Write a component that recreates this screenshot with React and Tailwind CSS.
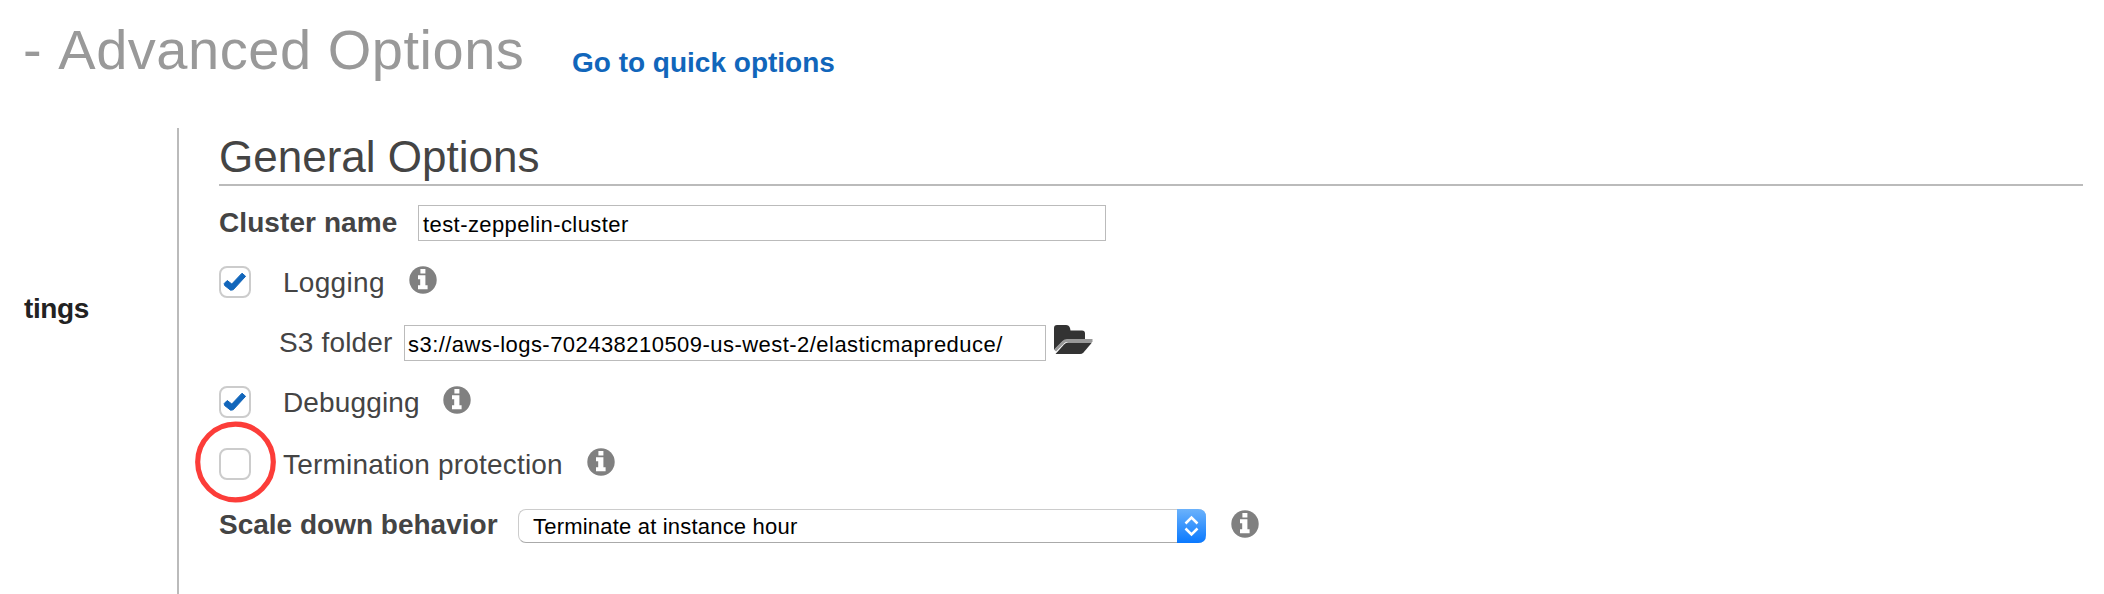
import React from "react";

function InfoIcon() {
  return (
    <svg className="size-7 shrink-0" viewBox="0 0 28 28">
      <circle cx="14" cy="14" r="13.7" fill="#808080" />
      <path fill="#fff" d="M11.400 3h5v4.400h-5zM9 9.200h7.400v10h2.200v4H9v-4h2.200v-6H9z" />
    </svg>
  );
}

function Checkbox({ checked }) {
  return (
    <span className="flex size-8 shrink-0 items-center justify-center rounded-[8px] border-2 border-[#cccccc] bg-white">
      {checked && (
        <svg className="size-7" viewBox="0 0 28 28">
          <path d="M3.200 15.500L6.200 12.500L10.800 16L21 5.200L24.600 8.300L12.200 21.800L9.600 22.200L3.600 17.500z" fill="#1166bb" stroke="#1166bb" strokeWidth="1" strokeLinejoin="round" />
        </svg>
      )}
    </span>
  );
}

function FolderIcon() {
  return (
    <svg className="h-[30px] w-10 shrink-0" viewBox="0 0 40 30">
      <path fill="#333" d="M1 25V3q0-3 3-3h9q3 0 4 3l.5 2.500H29q3 0 3 3V15H13q-2 0-3.500 1.500z" />
      <path fill="none" stroke="#999" strokeWidth="3" d="M2 25.500L10.500 17q1.500-1.500 3.500-1.500H39.500" />
      <path fill="#333" d="M2.500 29L11 19.500Q13 17.500 15 17.500H39L30.500 27.500Q29 29 27 29z" />
    </svg>
  );
}

export default function App() {
  return (
    <div className="flex h-[594px] w-[2104px] flex-col overflow-hidden bg-white font-['Liberation_Sans',Arial,sans-serif] text-[28px] leading-8 whitespace-nowrap text-[#444444]">
      <header className="flex h-32 shrink-0 items-start pl-[23px]">
        <h1 className="w-[549px] pt-[18px] text-[56px] leading-[64px] tracking-[0.53px] text-[#999999]">- <span className="inline-block">Advanced Options</span></h1>
        <a className="pt-[47px] font-bold text-[#1166bb]">Go to quick options</a>
      </header>
      <div className="flex flex-1">
        <aside className="w-[177px] pt-[165px] pl-6 font-bold tracking-[-0.4px] text-[#222222]">tings</aside>
        <main className="flex flex-1 flex-col border-l-2 border-[#bbbbbb] pr-[21px] pl-10">
          <h2 className="h-[58px] border-b-2 border-[#bbbbbb] pt-1 text-[44px] leading-[50px]">General Options</h2>
          <div className="mt-[19px] flex h-9 items-start">
            <label className="w-[199px] pt-0.5 font-bold tracking-[0.08px]">Cluster name</label>
            <div className="h-9 w-[688px] border border-[#bbbbbb] pt-[3px] pl-1 text-[22px] tracking-[0.42px] text-black">test-zeppelin-cluster</div>
          </div>
          <div className="mt-[25px] flex h-8 items-start">
            <Checkbox checked />
            <span className="ml-8 w-[126px] pt-px tracking-[0.3px]">Logging</span>
            <InfoIcon />
          </div>
          <div className="mt-[27px] flex h-9 items-start pl-[60px]">
            <label className="w-[125px] pt-0.5 tracking-[0.15px]">S3 folder</label>
            <div className="h-9 w-[642px] border border-[#bbbbbb] pt-[3px] pl-[3px] text-[22px] tracking-[0.46px] text-black">s3://aws-logs-702438210509-us-west-2/elasticmapreduce/</div>
            <span className="ml-[7px]"><FolderIcon /></span>
          </div>
          <div className="mt-[25px] flex h-8 items-start">
            <Checkbox checked />
            <span className="ml-8 w-[160px] pt-px tracking-[0.15px]">Debugging</span>
            <InfoIcon />
          </div>
          <div className="mt-[30px] flex h-8 items-start">
            <span className="relative">
              <Checkbox />
              <svg className="absolute -top-7 -left-6 h-[84px] w-[82px]" viewBox="0 0 82 84">
                <circle cx="40.500" cy="42" r="37.800" fill="none" stroke="#fc3d39" strokeWidth="5.200" />
              </svg>
            </span>
            <span className="ml-8 w-[304px] pt-px tracking-[0.2px]">Termination protection</span>
            <InfoIcon />
          </div>
          <div className="mt-[29px] flex h-[34px] items-start">
            <label className="w-[299px] font-bold">Scale down behavior</label>
            <div className="flex h-[34px] w-[688px] items-start rounded-[8px] border border-r-0 border-[#cccccc] border-b-[#aaaaaa] pl-3.5 text-[22px] tracking-[0.2px] text-black">
              <span className="flex-1 pt-px">Terminate at instance hour</span>
              <svg className="-mt-px h-[34px] w-[29px]" viewBox="0 0 29 34">
                <defs>
                  <linearGradient id="stepper" x2="0" y2="1">
                    <stop stopColor="#6bb2fb" />
                    <stop offset="1" stopColor="#0a79ff" />
                  </linearGradient>
                </defs>
                <path fill="url(#stepper)" d="M0 0h21q8 0 8 8v18q0 8-8 8H0z" />
                <path fill="none" stroke="#fff" strokeWidth="2.500" d="M8.500 14.500l6-6 6 6M8.500 19.500l6 6 6-6" />
              </svg>
            </div>
            <span className="ml-[25px] pt-px"><InfoIcon /></span>
          </div>
        </main>
      </div>
    </div>
  );
}
